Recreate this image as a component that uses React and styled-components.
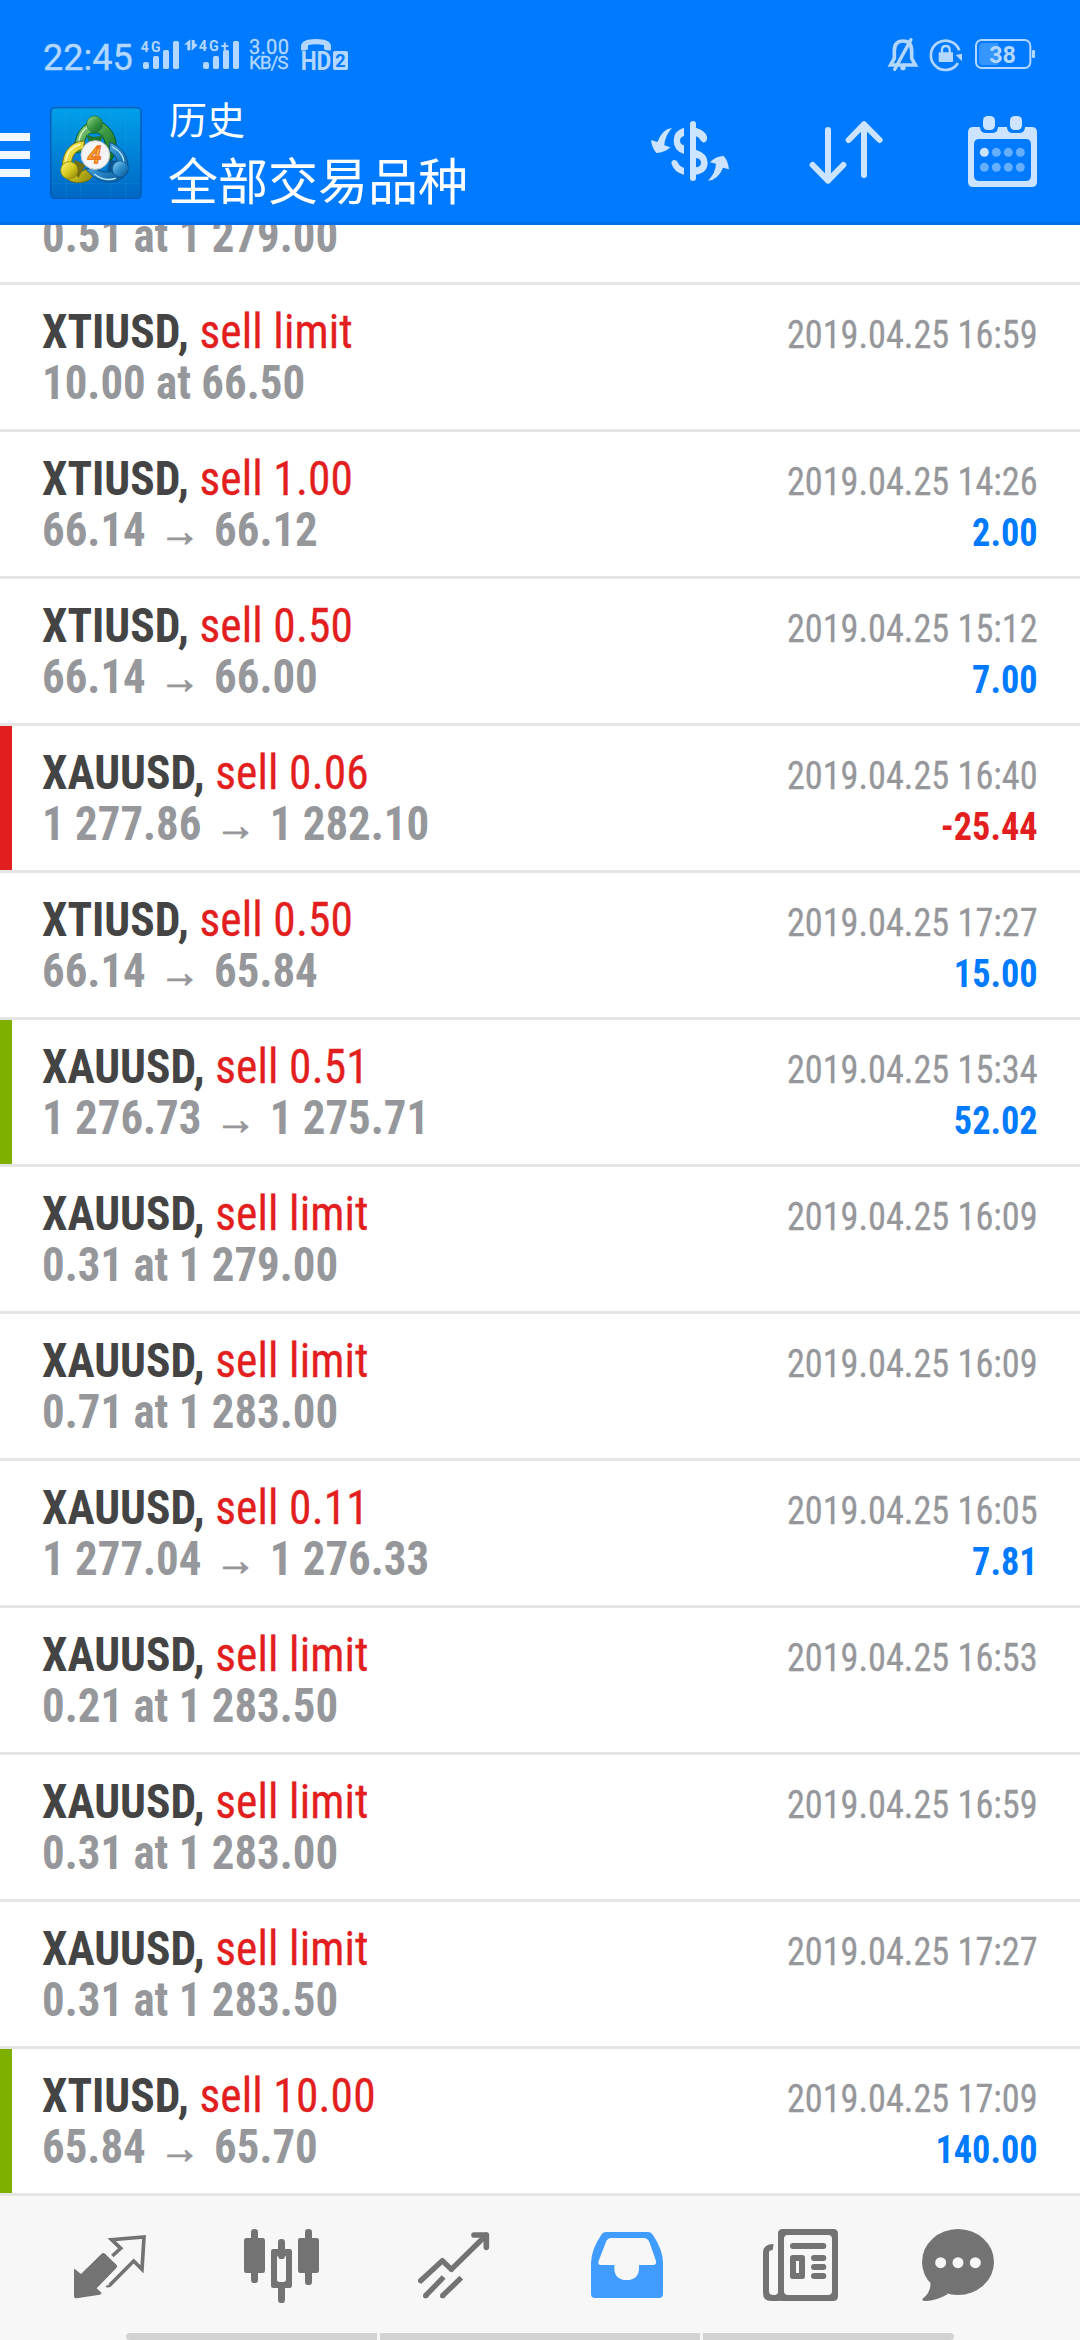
import styled, { createGlobalStyle } from "styled-components";

const GlobalStyle = createGlobalStyle`
  body {
    margin: 0;
    background: #fff;
    font-family: "Roboto Condensed", Roboto, "Noto Sans CJK SC", sans-serif;
  }
`;

const Screen = styled.div`
  display: flex;
  flex-direction: column;
  width: 1080px;
  height: 2340px;
  overflow: hidden;
`;

const Header = styled.header`
  flex: none;
  box-sizing: border-box;
  height: 225px;
  background: #007aff;
  border-bottom: 3px solid #006ee6;
`;

const StatusBar = styled.div`
  display: flex;
  box-sizing: border-box;
  height: 90px;
  padding: 37px 44px 0 42px;
  color: #b3d7ff;
  font-family: Roboto, sans-serif;
`;

const Clock = styled.div`
  width: 99px;
  margin-top: 1px;
  margin-right: -1px;
  padding-left: 1px;
  font-size: 36px;
  line-height: 40px;
  box-sizing: border-box;
  width: 100px;
  -webkit-text-stroke: 0.4px #b3d7ff;
`;

const Speed = styled.div`
  width: 51px;
  margin: 3px 0 0 10px;
  font-size: 20px;
  line-height: 15px;
  letter-spacing: 0.3px;
  -webkit-text-stroke: 0.3px #b3d7ff;
`;

const SpeedUnit = styled.div`
  font-size: 19px;
  letter-spacing: -1.1px;
`;

const StatusIcon = styled.svg`
  flex: none;
  display: block;
  width: ${(p) => p.$w}px;
  height: 34px;
  margin-left: ${(p) => p.$gap || 0}px;
  fill: #b3d7ff;
  overflow: visible;
`;

const Spacer = styled.div`
  flex: 1;
`;

const Toolbar = styled.div`
  display: flex;
  align-items: center;
  height: 126px;
  padding-right: 43px;
`;

const MenuButton = styled.div`
  display: flex;
  flex-direction: column;
  gap: 10px;
  width: 30px;
  margin-top: 4px;
`;

const MenuBar = styled.span`
  height: 8px;
  background: #f0f7ff;
`;

const Logo = styled.svg`
  flex: none;
  width: 92px;
  height: 92px;
  margin: 0 26px 0 20px;
`;

const Titles = styled.div`
  flex: 1;
  padding-bottom: 10px;
  color: #fff;
  font-family: "Noto Sans CJK SC", sans-serif;
`;

const Caption = styled.div`
  padding-left: 1px;
  font-size: 38px;
  line-height: 60px;
`;

const Title = styled.div`
  font-size: 50px;
  line-height: 60px;
`;

const Action = styled.svg`
  flex: none;
  width: ${(p) => p.$w}px;
  height: 74px;
  margin-left: ${(p) => p.$gap || 0}px;
  fill: #cce4ff;
`;

const List = styled.main`
  flex: 1;
  min-height: 0;
  display: flex;
  flex-direction: column;
  justify-content: flex-end;
  overflow: hidden;
`;

const stripes = { red: "#e21e1e", green: "#7eb000" };

const Row = styled.div`
  flex: none;
  display: flex;
  justify-content: space-between;
  box-sizing: border-box;
  height: 147px;
  padding: 21px 42px 0;
  border-bottom: 3px solid #e5e5e5;
  box-shadow: ${(p) =>
    p.$stripe ? `inset 12px 0 ${stripes[p.$stripe]}` : "none"};
  white-space: pre;
`;

const Deal = styled.div`
  font-size: 48px;
  line-height: 51px;
`;

const Symbol = styled.div`
  color: #e21e1e;
  letter-spacing: 0.15px;
  transform: scaleX(0.946);
  transform-origin: left;
  -webkit-text-stroke: 0.3px #e21e1e;

  b {
    color: #444;
    letter-spacing: 0;
    -webkit-text-stroke: 0;
  }
`;

const Price = styled.div`
  color: #96979b;
  font-weight: 700;
  transform: scaleX(0.935);
  transform-origin: left;
`;

const Arrow = styled.span`
  display: inline-block;
  width: 73px;
  text-align: center;
  font-family: "Liberation Sans", sans-serif;
  font-size: 44px;
  font-weight: 400;
  line-height: 1;
  -webkit-text-stroke: 1px #96979b;
`;

const Result = styled.div`
  padding-top: 4px;
  color: #96979b;
  font-size: 39px;
  line-height: 51px;
  text-align: right;
  transform: scaleX(0.93);
  transform-origin: right;
`;

const Time = styled.div`
  -webkit-text-stroke: 0.3px #96979b;
`;

const Profit = styled.div`
  color: ${(p) => (p.$loss ? "#e21e1e" : "#007aff")};
  font-weight: 700;
`;

const Bottom = styled.footer`
  flex: none;
  display: flex;
  flex-direction: column;
  justify-content: space-between;
  height: 144px;
  background: #f7f7f7;
`;

const Tabs = styled.nav`
  display: grid;
  grid-template-columns: 170px 174px 173px 172px 159px 73px;
  padding: 32px 0 0 74px;
`;

const Tab = styled.svg`
  display: block;
  width: ${(p) => p.$w}px;
  height: 76px;
  fill: ${(p) => (p.$active ? "#409cff" : "#737373")};
`;

const HomeBar = styled.div`
  display: grid;
  grid-template-columns: 251px 320px 251px;
  gap: 3px;
  height: 7px;
  margin: 0 auto;
  border-radius: 4px;
  overflow: hidden;

  span {
    background: #d2d2d2;
  }
`;

const deals = [
  { symbol: "XAUUSD", type: "sell limit", price: "0.51 at 1 279.00", time: "2019.04.25 15:34" },
  { symbol: "XTIUSD", type: "sell limit", price: "10.00 at 66.50", time: "2019.04.25 16:59" },
  { symbol: "XTIUSD", type: "sell 1.00", from: "66.14", to: "66.12", time: "2019.04.25 14:26", profit: "2.00" },
  { symbol: "XTIUSD", type: "sell 0.50", from: "66.14", to: "66.00", time: "2019.04.25 15:12", profit: "7.00" },
  { symbol: "XAUUSD", type: "sell 0.06", from: "1 277.86", to: "1 282.10", time: "2019.04.25 16:40", profit: "-25.44", stripe: "red" },
  { symbol: "XTIUSD", type: "sell 0.50", from: "66.14", to: "65.84", time: "2019.04.25 17:27", profit: "15.00" },
  { symbol: "XAUUSD", type: "sell 0.51", from: "1 276.73", to: "1 275.71", time: "2019.04.25 15:34", profit: "52.02", stripe: "green" },
  { symbol: "XAUUSD", type: "sell limit", price: "0.31 at 1 279.00", time: "2019.04.25 16:09" },
  { symbol: "XAUUSD", type: "sell limit", price: "0.71 at 1 283.00", time: "2019.04.25 16:09" },
  { symbol: "XAUUSD", type: "sell 0.11", from: "1 277.04", to: "1 276.33", time: "2019.04.25 16:05", profit: "7.81" },
  { symbol: "XAUUSD", type: "sell limit", price: "0.21 at 1 283.50", time: "2019.04.25 16:53" },
  { symbol: "XAUUSD", type: "sell limit", price: "0.31 at 1 283.00", time: "2019.04.25 16:59" },
  { symbol: "XAUUSD", type: "sell limit", price: "0.31 at 1 283.50", time: "2019.04.25 17:27" },
  { symbol: "XTIUSD", type: "sell 10.00", from: "65.84", to: "65.70", time: "2019.04.25 17:09", profit: "140.00", stripe: "green" },
];

const DealRow = ({ deal }) => (
  <Row $stripe={deal.stripe}>
    <Deal>
      <Symbol>
        <b>{deal.symbol},</b> {deal.type}
      </Symbol>
      <Price>
        {deal.from ? (
          <>
            {deal.from}
            <Arrow>→</Arrow>
            {deal.to}
          </>
        ) : (
          deal.price
        )}
      </Price>
    </Deal>
    <Result>
      <Time>{deal.time}</Time>
      {deal.profit && (
        <Profit $loss={deal.profit.startsWith("-")}>{deal.profit}</Profit>
      )}
    </Result>
  </Row>
);

const SignalBars = ({ x }) => (
  <>
    <rect x={x} y="126" width="18" height="21" rx="6" />
    <rect x={x + 30} y="108" width="18" height="39" rx="5" />
    <rect x={x + 60} y="90" width="18" height="57" rx="5" />
    <rect x={x + 90} y="63" width="18" height="84" rx="5" />
  </>
);

const Status = () => (
  <StatusBar>
    <Clock>22:45</Clock>
    <StatusIcon $w={98} viewBox="423 51 294 102">
      <text x="422" y="95" fontSize="42" fontWeight="700" textLength="60">4G</text>
      <SignalBars x={429} />
      <path d="M571 58V91H562V74H552ZM575 60H584V70L593 75L575 92Z" />
      <text x="596" y="92" fontSize="43" fontWeight="700" textLength="90">4G+</text>
      <SignalBars x={609} />
    </StatusIcon>
    <Speed>
      <div>3.00</div>
      <SpeedUnit>KB/S</SpeedUnit>
    </Speed>
    <StatusIcon $w={48} $gap={1} viewBox="903 51 144 102">
      <path d="M903 90V80Q903 57 948 57T993 80V90Q984 94 972 88V76Q948 70 924 76V88Q912 94 903 90Z" />
      <text x="902" y="150" fontSize="80" fontWeight="700" textLength="92" lengthAdjust="spacingAndGlyphs">HD</text>
      <rect x="999" y="93" width="45" height="57" rx="5" />
      <text x="1006" y="142" fontSize="54" fontWeight="700" fill="#007aff">2</text>
    </StatusIcon>
    <Spacer />
    <StatusIcon $w={31} viewBox="84 54 93 102">
      <path d="M129 66Q103 66 103 96V118L92 138H166L155 118V96Q155 66 129 66Z" fill="none" stroke="#b3d7ff" strokeWidth="11" />
      <path d="M104 151L153 62" stroke="#b3d7ff" strokeWidth="10" strokeLinecap="round" />
      <circle cx="129" cy="146" r="8" />
    </StatusIcon>
    <StatusIcon $w={33} $gap={11} viewBox="210 54 99 102">
      <path d="M298 94A44 44 0 1 0 294 132" fill="none" stroke="#b3d7ff" strokeWidth="8" />
      <path d="M287 108L306 104V127Z" />
      <rect x="236" y="100" width="43" height="29" rx="2" />
      <path d="M246 102V92Q246 81 257.500 81T269 92V102" fill="none" stroke="#b3d7ff" strokeWidth="7" />
    </StatusIcon>
    <StatusIcon $w={61} $gap={12} viewBox="345 54 183 102">
      <rect x="348" y="63" width="163" height="84" rx="17" fill="none" stroke="#b3d7ff" strokeWidth="6" />
      <path d="M369 72H414V138H369Q357 138 357 126V84Q357 72 369 72Z" fill="#3696ff" />
      <rect x="516" y="93" width="9" height="24" rx="3" />
      <text x="388" y="131" fontSize="70" fontWeight="700" textLength="80">38</text>
    </StatusIcon>
  </StatusBar>
);

const AppLogo = () => (
  <Logo viewBox="18 20 276 276">
    <defs>
      <linearGradient id="sky" x1="0" y1="0" x2="0" y2="1">
        <stop offset="0" stopColor="#00a0ea" />
        <stop offset="1" stopColor="#0066c4" />
      </linearGradient>
      <linearGradient id="green" x1="0" y1="0" x2="1" y2="1">
        <stop offset="0" stopColor="#a4dc8e" />
        <stop offset="0.5" stopColor="#3d9a45" />
        <stop offset="1" stopColor="#0f6524" />
      </linearGradient>
      <linearGradient id="yellow" x1="0" y1="0" x2="1" y2="1">
        <stop offset="0" stopColor="#fff27a" />
        <stop offset="0.5" stopColor="#d9cb1f" />
        <stop offset="1" stopColor="#827f0c" />
      </linearGradient>
      <linearGradient id="blue" x1="0" y1="0" x2="1" y2="1">
        <stop offset="0" stopColor="#8fd5f7" />
        <stop offset="0.5" stopColor="#2c8bcb" />
        <stop offset="1" stopColor="#075390" />
      </linearGradient>
    </defs>
    <rect x="20" y="22" width="271" height="273" rx="13" fill="url(#sky)" stroke="#0058b0" strokeWidth="4" />
    <path d="M66 24V294M110 24V294M200 24V294M245 24V294M22 68H289M22 112H289M22 250H289" stroke="#36b0f0" strokeOpacity="0.25" strokeWidth="2" />
    <path d="M152 60C112 70 88 108 92 158L121 152C117 126 124 106 140 98H164C184 110 188 136 182 166L198 184C238 138 208 68 152 60Z" fill="url(#green)" stroke="#0b5a20" strokeWidth="3" />
    <path d="M104 140C102 106 120 82 138 78" fill="none" stroke="#d8f2c8" strokeWidth="4" strokeLinecap="round" />
    <path d="M122 122C80 122 50 158 56 212C62 242 96 256 134 240L150 224L128 204C112 220 92 214 84 196C80 172 92 150 118 146Z" fill="url(#yellow)" stroke="#77700a" strokeWidth="3" />
    <path d="M66 182C68 156 84 140 108 133" fill="none" stroke="#fffbc0" strokeWidth="4" strokeLinecap="round" />
    <path d="M198 126C238 142 258 174 250 216C228 254 164 258 126 206L150 204C176 218 206 222 218 198C224 182 214 162 196 152Z" fill="url(#blue)" stroke="#06508c" strokeWidth="3" />
    <path d="M206 140C228 152 240 170 240 188M152 222C172 238 196 240 214 234" fill="none" stroke="#b8e6fb" strokeWidth="4" strokeLinecap="round" />
    <path d="M126 102Q152 118 178 102L168 130H138Z" fill="#23762f" />
    <path d="M92 178L124 194L104 232L88 216Z" fill="#716f10" />
    <path d="M196 180L222 182L214 222L190 212Z" fill="#0a5590" />
    <circle cx="152" cy="71" r="24" fill="url(#green)" stroke="#1c7430" strokeWidth="2" />
    <circle cx="76" cy="210" r="26" fill="url(#yellow)" stroke="#89810b" strokeWidth="2" />
    <circle cx="229" cy="206" r="24" fill="url(#blue)" stroke="#06508c" strokeWidth="2" />
    <circle cx="154" cy="164" r="43" fill="#f4f4f6" stroke="#c6c8ca" strokeWidth="3" />
    <text x="131" y="189" fontFamily="Roboto" fontSize="74" fontStyle="italic" fontWeight="500" fill="#ffc93c" stroke="#ee7420" strokeWidth="4">4</text>
  </Logo>
);

const dots = [1093, 1129, 1165, 1201];

const Actions = () => (
  <>
    <Action $w={78} viewBox="93 78 234 222">
      <path d="M156 114Q126 118 112 156L93 150Q96 175 109 189Q135 188 151 172L133 166Q134 138 156 114Z" />
      <path d="M192 113Q161 122 161 152Q161 182 192 192V166Q180 162 180 152Q180 142 192 138Z" />
      <path d="M192 254Q162 248 154 220Q154 211 163 210Q171 210 174 218Q179 230 192 233Z" />
      <rect x="210" y="93" width="18" height="180" rx="9" />
      <path d="M227 113Q255 120 261 140Q263 150 256 156Q249 160 243 152Q238 142 227 138Z" />
      <path d="M227 179Q263 190 263 218Q263 248 227 254V232Q243 230 243 218Q243 206 227 204Z" />
      <path d="M264 272Q294 270 309 233L327 238Q324 212 311 198Q288 198 270 217L288 221Q287 248 264 272Z" />
    </Action>
    <Action $w={74} $gap={80} viewBox="567 78 222 222">
      <g fill="none" stroke="#cce4ff" strokeWidth="18" strokeLinecap="round" strokeLinejoin="round">
        <path d="M624 120V272M578 225L624 272L670 225" />
        <path d="M732 255V103M686 150L732 103L779 150" />
      </g>
    </Action>
    <Action $w={69} $gap={85} viewBox="1044 78 207 222">
      <path fillRule="evenodd" d="M1060 111H1235Q1251 111 1251 127V275Q1251 291 1235 291H1060Q1044 291 1044 275V127Q1044 111 1060 111ZM1078 147Q1062 147 1062 163V257Q1062 273 1078 273H1217Q1233 273 1233 257V163Q1233 147 1217 147Z" />
      <path d="M1080 108V113Q1082 129 1098 129H1116Q1132 129 1134 113V108ZM1161 108V113Q1163 129 1179 129H1197Q1213 129 1215 113V108Z" fill="#007aff" />
      <rect x="1089" y="78" width="36" height="42" rx="14" />
      <rect x="1170" y="78" width="36" height="42" rx="14" />
      {dots.map((x, i) => (
        <g key={x} fill="#66afff">
          <circle cx={x} cy="187" r="13.500" fill={i === 0 ? "#cce4ff" : "#66afff"} />
          <circle cx={x} cy="232" r="13.500" />
        </g>
      ))}
    </Action>
  </>
);

const TabBar = () => (
  <Tabs>
    <Tab $w={72} viewBox="42 24 216 228">
      <path d="M42 146Q46 147 63 162L124 102Q130 96 136 102L169 134Q174 139 169 144L110 205L125 219Q124 223 119 224L50 235Q42 235 42 227Z" />
      <path d="M157 108L182 85L155 59L252 51L246 148L221 123L149 196" fill="none" stroke="#737373" strokeWidth="11" />
      <path d="M140 196L154 195L152 200Q146 204 137 201Z" />
    </Tab>
    <Tab $w={75} viewBox="552 24 225 228">
      <rect x="573" y="27" width="21" height="162" rx="10" />
      <rect x="552" y="54" width="63" height="105" rx="7" />
      <rect x="654" y="57" width="21" height="60" rx="10" />
      <rect x="654" y="190" width="21" height="59" rx="10" />
      <path fillRule="evenodd" d="M640 87H689Q696 87 696 94V197Q696 204 689 204H640Q633 204 633 197V94Q633 87 640 87ZM659 105Q651 105 651 113V178Q651 186 659 186H670Q678 186 678 178V113Q678 105 670 105Z" />
      <rect x="735" y="27" width="21" height="168" rx="10" />
      <rect x="714" y="54" width="63" height="105" rx="7" />
    </Tab>
    <Tab $w={72} viewBox="1074 24 216 228">
      <g fill="none" stroke="#737373" strokeWidth="16" strokeLinejoin="round">
        <path d="M1082 182L1147 122L1174 148L1279 45" strokeLinecap="round" />
        <path d="M1242 45H1279V82" strokeWidth="17" strokeLinecap="round" />
        <path d="M1097 227L1151 171M1148 227L1204 173" />
      </g>
      <circle cx="1097" cy="227" r="8" />
      <circle cx="1148" cy="227" r="8" />
    </Tab>
    <Tab $w={72} $active viewBox="33 24 216 228">
      <path fillRule="evenodd" d="M78 36H205Q213 36 219 45Q249 90 249 130V222Q249 234 237 234H45Q33 234 33 222V130Q33 90 65 43Q70 36 78 36ZM92 54Q81 56 77 68L56 122Q52 135 62 135H103V143Q103 180 140 180T177 143V135H220Q231 135 227 120L208 66Q203 54 190 54Z" />
    </Tab>
    <Tab $w={75} viewBox="549 24 225 228">
      <path fillRule="evenodd" d="M608 27H760Q774 27 774 41V229Q774 243 760 243H608Q594 243 594 229V41Q594 27 608 27ZM624 45Q612 45 612 57V213Q612 225 624 225H744Q756 225 756 213V57Q756 45 744 45Z" />
      <path d="M600 243H573Q549 243 549 219V98Q549 72 581 72L578 90Q567 90 567 98V213Q567 225 580 225Q592 225 594 218L606 238Z" />
      <rect x="630" y="69" width="109" height="18" rx="9" />
      <path fillRule="evenodd" d="M638 105H667Q675 105 675 113V169Q675 177 667 177H638Q630 177 630 169V113Q630 105 638 105ZM648 123V159H657V123Z" />
      <rect x="693" y="105" width="46" height="18" rx="9" />
      <rect x="693" y="132" width="46" height="18" rx="9" />
      <rect x="693" y="159" width="46" height="18" rx="9" />
    </Tab>
    <Tab $w={73} viewBox="1026 24 219 228">
      <ellipse cx="1134" cy="126" rx="108" ry="99" />
      <path d="M1051 188Q1054 216 1028 236Q1024 243 1036 243Q1070 242 1104 222Z" />
      <g fill="#f7f7f7">
        <circle cx="1082" cy="128" r="16.500" />
        <circle cx="1134" cy="128" r="16.500" />
        <circle cx="1186" cy="128" r="16.500" />
      </g>
    </Tab>
  </Tabs>
);

const App = () => {
  return (
    <Screen>
      <GlobalStyle />
      <Header>
        <Status />
        <Toolbar>
          <MenuButton>
            <MenuBar />
            <MenuBar />
            <MenuBar />
          </MenuButton>
          <AppLogo />
          <Titles>
            <Caption>历史</Caption>
            <Title>全部交易品种</Title>
          </Titles>
          <Actions />
        </Toolbar>
      </Header>
      <List>
        {deals.map((deal, i) => (
          <DealRow key={i} deal={deal} />
        ))}
      </List>
      <Bottom>
        <TabBar />
        <HomeBar>
          <span />
          <span />
          <span />
        </HomeBar>
      </Bottom>
    </Screen>
  );
};

export default App;
